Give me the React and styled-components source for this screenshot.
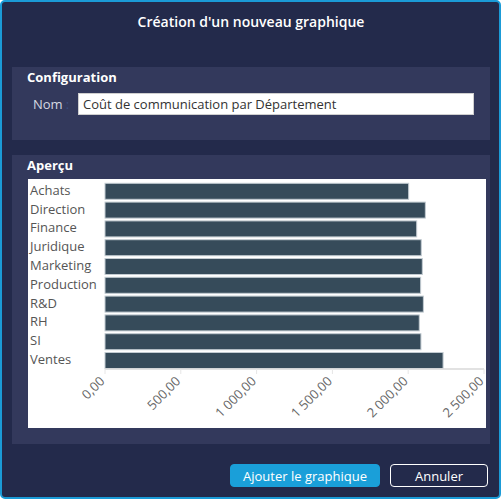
import styled, { createGlobalStyle } from "styled-components";

const GlobalStyle = createGlobalStyle`
  html, body {
    margin: 0;
    padding: 0;
    background: #ffffff;
  }
  body {
    font-family: "Open Sans", "Liberation Sans", sans-serif;
  }
  * {
    box-sizing: border-box;
  }
`;

const Frame = styled.div`
  width: 501px;
  height: 499px;
  border: 2px solid #1b9bd7;
  border-radius: 5px;
  background: #232a4b;
  padding: 10px 9px 10px 10px;
  display: flex;
  flex-direction: column;
`;

const Title = styled.h1`
  margin: 0;
  font-size: 14px;
  font-weight: 600;
  line-height: 20px;
  color: #ffffff;
  text-align: center;
`;

const Panel = styled.section`
  background: #33395c;
  margin-top: ${(p) => p.$top}px;
  padding: 1px ${(p) => p.$right}px ${(p) => p.$bottom}px 15px;
  display: flex;
  flex-direction: column;
`;

const PanelTitle = styled.h2`
  margin: 0;
  font-size: 13px;
  font-weight: 700;
  line-height: 18px;
  color: #ffffff;
`;

const FieldRow = styled.div`
  display: flex;
  align-items: center;
  margin-top: 7px;
  padding-left: 6px;
`;

const Label = styled.label`
  font-size: 13px;
  color: #d6dae2;
  width: 45px;
  flex: none;

  & span {
    color: #3b4d7e;
    margin-left: 3px;
  }
`;

const Input = styled.input`
  flex: 1;
  height: 22px;
  border: 1px solid #cfcfcf;
  background: #ffffff;
  padding: 0 4px;
  font-family: "Open Sans", "Liberation Sans", sans-serif;
  font-size: 13px;
  color: #333333;
  outline: none;
`;

const ChartBox = styled.div`
  margin-top: 5px;
  margin-left: 1px;
  background: #ffffff;
  height: 249px;

  & svg {
    display: block;
    overflow: visible;
  }
`;

const Footer = styled.div`
  margin-top: auto;
  display: flex;
  justify-content: flex-end;
  gap: 10px;
  padding-right: 2px;
`;

const Button = styled.button`
  height: 23px;
  width: ${(p) => p.$width}px;
  border-radius: 4px;
  font-family: "Open Sans", "Liberation Sans", sans-serif;
  font-size: 13px;
  color: #ffffff;
  cursor: pointer;
  padding: 0;
  border: 1px solid ${(p) => (p.$primary ? "#1a9fd9" : "#ffffff")};
  background: ${(p) => (p.$primary ? "#1a9fd9" : "transparent")};
`;

const data = [
  ["Achats", 2003],
  ["Direction", 2113],
  ["Finance", 2056],
  ["Juridique", 2086],
  ["Marketing", 2093],
  ["Production", 2082],
  ["R&D", 2100],
  ["RH", 2073],
  ["SI", 2084],
  ["Ventes", 2230],
];

const ticks = ["0,00", "500,00", "1 000,00", "1 500,00", "2 000,00", "2 500,00"];

const X0 = 77;
const SPAN = 379;
const AXIS_Y = 190;
const FONT = "'Open Sans', 'Liberation Sans', sans-serif";

function Chart() {
  return (
    <svg width="458" height="249">
      {data.map(([name, v], i) => {
        const y = 4.3 + i * 18.8;
        return (
          <g key={name}>
            <text x="2" y={y + 11.5} fontSize="13" fill="#555555" fontFamily={FONT}>
              {name}
            </text>
            <rect
              x={X0}
              y={y}
              width={(v / 2500) * SPAN}
              height="16"
              fill="#364b5a"
              stroke="#c2cbd1"
              strokeWidth="1"
            />
          </g>
        );
      })}
      <line x1={X0} y1={AXIS_Y} x2={X0 + SPAN} y2={AXIS_Y} stroke="#d9d9d9" strokeWidth="1.5" />
      {ticks.map((t, i) => {
        const x = X0 + (i * SPAN) / 5;
        const px = x + 0.5;
        const py = AXIS_Y + 13;
        return (
          <g key={t}>
            <line x1={x} y1={AXIS_Y} x2={x} y2={AXIS_Y + 5} stroke="#e6e6e6" strokeWidth="1" />
            <text
              x={px}
              y={py}
              fontSize="13"
              fill="#666666"
              textAnchor="end"
              transform={`rotate(-45 ${px} ${py})`}
              fontFamily={FONT}
            >
              {t}
            </text>
          </g>
        );
      })}
    </svg>
  );
}

export default function App() {
  return (
    <>
      <GlobalStyle />
      <Frame>
        <Title>Création d'un nouveau graphique</Title>
        <Panel $top={35} $right={16} $bottom={25}>
          <PanelTitle>Configuration</PanelTitle>
          <FieldRow>
            <Label>
              Nom<span>:</span>
            </Label>
            <Input defaultValue="Coût de communication par Département" />
          </FieldRow>
        </Panel>
        <Panel $top={15} $right={4} $bottom={16}>
          <PanelTitle>Aperçu</PanelTitle>
          <ChartBox>
            <Chart />
          </ChartBox>
        </Panel>
        <Footer>
          <Button $primary $width={150}>
            Ajouter le graphique
          </Button>
          <Button $width={98}>Annuler</Button>
        </Footer>
      </Frame>
    </>
  );
}
